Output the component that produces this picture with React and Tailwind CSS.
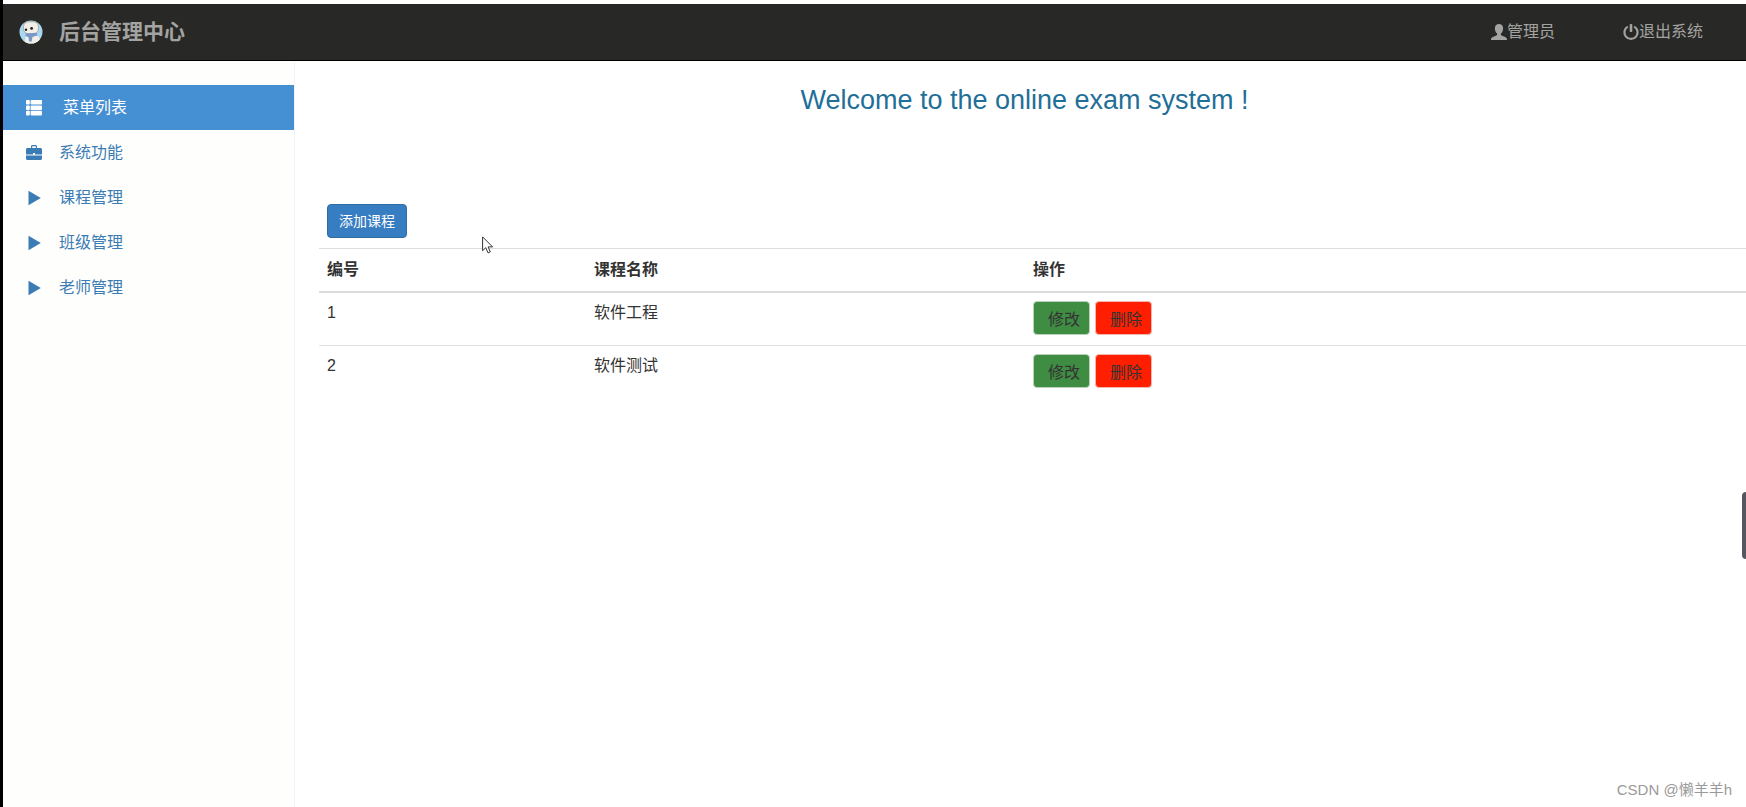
import React from "react";

const menuItems = [
  { label: "系统功能", icon: "briefcase" },
  { label: "课程管理", icon: "play" },
  { label: "班级管理", icon: "play" },
  { label: "老师管理", icon: "play" },
];

const courses = [
  { id: 1, name: "软件工程" },
  { id: 2, name: "软件测试" },
];

const Logo = () => (
  <svg viewBox="0 0 24 24" className="size-6" aria-hidden="true">
    <clipPath id="logo-clip">
      <circle cx="12" cy="12" r="11.5" />
    </clipPath>
    <circle cx="12" cy="12" r="11.5" fill="#a9d8f0" />
    <g clipPath="url(#logo-clip)">
      <path d="M5 24l2-8h12l3 5v3z" fill="#f3efe6" />
      <rect x="4.500" y="1.800" width="15" height="12" rx="5" fill="#f3efe6" stroke="#8d8f8c" strokeWidth="0.6" />
      <path d="M6.500 13.500l11-.8 1 2.500-5 1.800-.8 4.500h-2.700l-.5-4.200-3-1.300z" fill="#7b98c8" />
      <circle cx="7" cy="9.800" r="1.200" fill="#222" />
      <circle cx="12.600" cy="8.400" r="1.400" fill="#222" />
    </g>
  </svg>
);

const icons = {
  list: (
    <>
      <rect x="0" y="0" width="3.800" height="4.600" rx="0.8" />
      <rect x="4.600" y="0" width="11.400" height="4.600" rx="0.8" />
      <rect x="0" y="5.400" width="3.800" height="4.600" rx="0.8" />
      <rect x="4.600" y="5.400" width="11.400" height="4.600" rx="0.8" />
      <rect x="0" y="10.800" width="3.800" height="4.600" rx="0.8" />
      <rect x="4.600" y="10.800" width="11.400" height="4.600" rx="0.8" />
    </>
  ),
  briefcase: (
    <>
      <path d="M5 3V1.400C5 .6 5.600 0 6.400 0h3.200C10.400 0 11 .6 11 1.400V3h3.500C15.300 3 16 3.700 16 4.500v5H9V8H7v1.500H0v-5C0 3.700.7 3 1.500 3zm1.200 0h3.600V1.200H6.200z" />
      <path d="M0 10.500h16v3c0 .8-.7 1.500-1.500 1.500h-13C.7 15 0 14.300 0 13.500z" />
    </>
  ),
  play: <path d="M2.500.8v14.400L14.800 8z" />,
  user: (
    <path d="M8 0C5.400 0 3.900 1.700 3.900 4.200c0 2.400.9 4.300 2.200 5.300v1.400c-.8.8-5 1.700-6 3.600-.1.500-.1 1-.1 1.500h16c0-.5 0-1-.1-1.500-1-1.900-5.200-2.800-6-3.600V9.500c1.300-1 2.200-2.900 2.200-5.300C12.100 1.700 10.600 0 8 0z" />
  ),
  power: (
    <>
      <path d="M4.800 2.600A6.600 6.600 0 1 0 11.200 2.600" fill="none" stroke="currentColor" strokeWidth="2.200" />
      <rect x="6.700" y="0" width="2.600" height="8" rx="0.8" />
    </>
  ),
};

const Icon = ({ name }) => (
  <svg viewBox="0 0 16 16" className="size-4 shrink-0 overflow-visible fill-current" aria-hidden="true">
    {icons[name]}
  </svg>
);

const Header = () => (
  <header className="flex h-[57px] items-center justify-between border-b border-black bg-[#282826] pr-[43px] pl-4 text-[#a3a3a1]">
    <a href="#" className="flex items-center gap-4">
      <Logo />
      <span className="text-[21px] leading-7 font-bold">后台管理中心</span>
    </a>
    <nav className="flex items-center gap-[68px]">
      <a href="#" className="flex items-center">
        <Icon name="user" />
        管理员
      </a>
      <a href="#" className="flex items-center">
        <Icon name="power" />
        退出系统
      </a>
    </nav>
  </header>
);

const Sidebar = () => (
  <aside className="w-[292px] shrink-0 border-r border-[#f3f3f3] bg-[#fefefc] pt-6">
    <h2 className="flex h-[45px] items-center gap-[21px] bg-[#458fd3] pl-[23px] text-white">
      <Icon name="list" />
      菜单列表
    </h2>
    <ul>
      {menuItems.map((item) => (
        <li key={item.label}>
          <a href="#" className="flex h-[45px] items-center gap-[17px] pl-[23px] text-[#3b7cb5]">
            <Icon name={item.icon} />
            {item.label}
          </a>
        </li>
      ))}
    </ul>
  </aside>
);

const CourseTable = () => (
  <table className="w-full table-fixed text-left text-[#333]">
    <thead>
      <tr className="border-t border-b-2 border-[#ddd]">
        <th className="w-[267px] px-2 py-[9px]">编号</th>
        <th className="w-[439px] px-2 py-[9px]">课程名称</th>
        <th className="px-2 py-[9px]">操作</th>
      </tr>
    </thead>
    <tbody>
      {courses.map((course) => (
        <tr key={course.id} className="border-t border-[#e3e3e3] align-top">
          <td className="px-2 pt-2 pb-[10px]">{course.id}</td>
          <td className="px-2 pt-2 pb-[10px]">{course.name}</td>
          <td className="px-2 pt-2 pb-[10px]">
            <div className="flex gap-[5px]">
              <button
                type="button"
                className="h-[34px] rounded-[4px] border border-[#b9d3bb] bg-[#3f8c43] pt-1 pr-[9px] pl-[14px]"
              >
                修改
              </button>
              <button
                type="button"
                className="h-[34px] rounded-[4px] border border-[#f3b5ad] bg-[#ff1f00] pt-1 pr-[9px] pl-[14px]"
              >
                删除
              </button>
            </div>
          </td>
        </tr>
      ))}
    </tbody>
  </table>
);

const Cursor = () => (
  <svg viewBox="0 0 12 18" className="absolute top-[236px] left-[479px] h-[18px] w-3" aria-hidden="true">
    <path
      d="M.6.9v13.800l3.200-3 2.200 5.200 2.300-1-2.200-5h4.500z"
      fill="#fff"
      stroke="#333"
      strokeWidth="1"
    />
  </svg>
);

const App = () => {
  return (
    <div className="relative flex min-h-screen flex-col border-l-3 border-black bg-white pt-1 font-['Liberation_Sans','Noto_Sans_CJK_SC',sans-serif] text-base">
      <Header />
      <div className="flex flex-1">
        <Sidebar />
        <main className="min-w-0 flex-1 pt-[18px] pl-6">
          <h1 className="pr-4 text-center text-[27px] leading-[42px] text-[#1f6f98]">
            Welcome to the online exam system !
          </h1>
          <div className="pt-[83px] pb-[10px] pl-2">
            <button
              type="button"
              className="h-[34px] rounded-[4px] border border-[#2e6da4] bg-[#377dc1] px-[11px] text-sm text-white"
            >
              添加课程
            </button>
          </div>
          <CourseTable />
        </main>
      </div>

      <Cursor />
      <div className="absolute top-[492px] right-0 h-[67px] w-1 rounded-l-[4px] bg-[#565661]" />
      <p className="absolute right-[14px] bottom-[5px] text-[15px] leading-6 text-[#9a9a9a]">CSDN @懒羊羊h</p>
    </div>
  );
};

export default App;
